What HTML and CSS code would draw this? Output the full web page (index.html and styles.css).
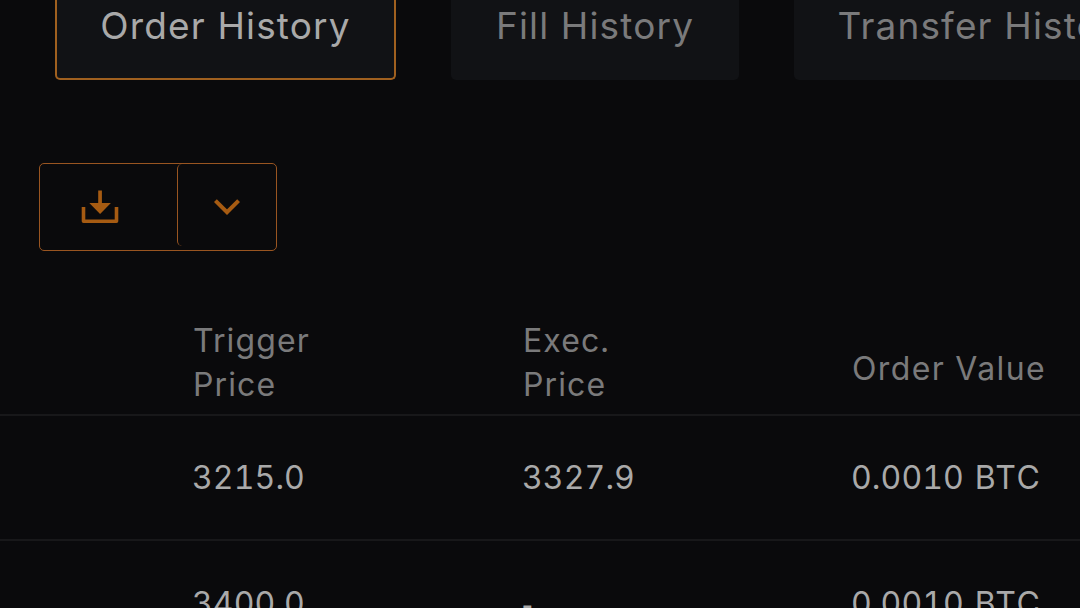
FILE: index.html
```html
<!DOCTYPE html>
<html lang="en">

<head>
    <meta charset="utf-8">
    <meta name="viewport" content="width=device-width, initial-scale=1.0">
    <title>Order History</title>
    <link rel="stylesheet" href="styles.css">
</head>

<body>
    <nav>
        <button class="tab valgt">Order History</button>
        <button class="tab fill">Fill History</button>
        <button class="tab transfer">Transfer History</button>
    </nav>
    <div class="export">
        <button class="download" aria-label="Download">
            <svg width="38" height="34" viewBox="0 0 38 34">
                <path d="M2.5 17v14.2h33V17" fill="none" stroke="currentColor" stroke-width="3.6" stroke-linejoin="round" />
                <path d="M17.2 0.5h3.7v12.5h9L19.1 24 8.3 13h8.9z" fill="currentColor" />
            </svg>
        </button>
        <button class="more" aria-label="More">
            <svg width="26" height="17" viewBox="0 0 26 17">
                <path d="M1.4 1.6L13 13.2 24.6 1.6" fill="none" stroke="currentColor" stroke-width="4" />
            </svg>
        </button>
    </div>
    <main>
        <div class="row head">
            <span>Trigger<br>Price</span>
            <span>Exec.<br>Price</span>
            <span class="value">Order Value</span>
        </div>
        <div class="row">
            <span>3215.0</span>
            <span>3327.9</span>
            <span>0.0010 <span class="unit">BTC</span></span>
        </div>
        <div class="row last">
            <span>3400.0</span>
            <span class="empty">-</span>
            <span>0.0010 <span class="unit">BTC</span></span>
        </div>
    </main>
</body>

</html>
```
FILE: styles.css
```css
* {
    padding: 0;
    margin: 0;
    box-sizing: border-box;
}

body {
    height: 608px;
    overflow: hidden;
    background-color: #0a0a0c;
    color: #a9a9a9;
    font-family: Inter, "Liberation Sans", sans-serif;
}

button {
    border: none;
    background: none;
    font-family: inherit;
    cursor: pointer;
}

nav {
    display: flex;
    gap: 55px;
    height: 80px;
    margin-left: 55px;
}

.tab {
    flex: none;
    width: 341px;
    padding-bottom: 29px;
    border-radius: 0 0 5px 5px;
    background-color: #111215;
    color: #7a7a7b;
    font-size: 37px;
    line-height: 51px;
    letter-spacing: 1.15px;
    white-space: nowrap;
}

.fill {
    width: 288px;
}

.transfer {
    width: 387px;
}

.valgt {
    padding-bottom: 27px;
    border: 2px solid #a0601f;
    border-top: none;
    color: #a9a9a9;
}

.export {
    display: flex;
    width: 238px;
    height: 88px;
    margin: 83px 0 0 39px;
    border: 1px solid #995521;
    border-radius: 5px;
    color: #a65b12;
}

.export button {
    display: flex;
    align-items: center;
    justify-content: center;
    color: inherit;
}

.download {
    width: 137px;
    padding-right: 17px;
}

.export .more {
    flex: 1;
    height: 82px;
    padding-top: 4px;
    border-left: 1px solid #995521;
    border-radius: 5px;
}

main {
    margin-top: 68px;
}

.row {
    display: grid;
    grid-template-columns: 330px 329px 1fr;
    align-items: center;
    height: 125px;
    padding-left: 192px;
    border-bottom: 2px solid #18181a;
    font-size: 32px;
    line-height: 44px;
    letter-spacing: 0.1px;
    font-variant-numeric: tabular-nums;
    white-space: nowrap;
}

.head {
    height: 97px;
    align-items: start;
    padding-left: 193px;
    color: #7a7a7b;
    letter-spacing: 1.1px;
}

.last {
    height: 127px;
}

.value {
    padding-top: 28px;
    letter-spacing: 1.4px;
}

.unit {
    margin-left: 2px;
    letter-spacing: 1.5px;
}

.empty {
    font-family: "Liberation Sans", sans-serif;
}
```
